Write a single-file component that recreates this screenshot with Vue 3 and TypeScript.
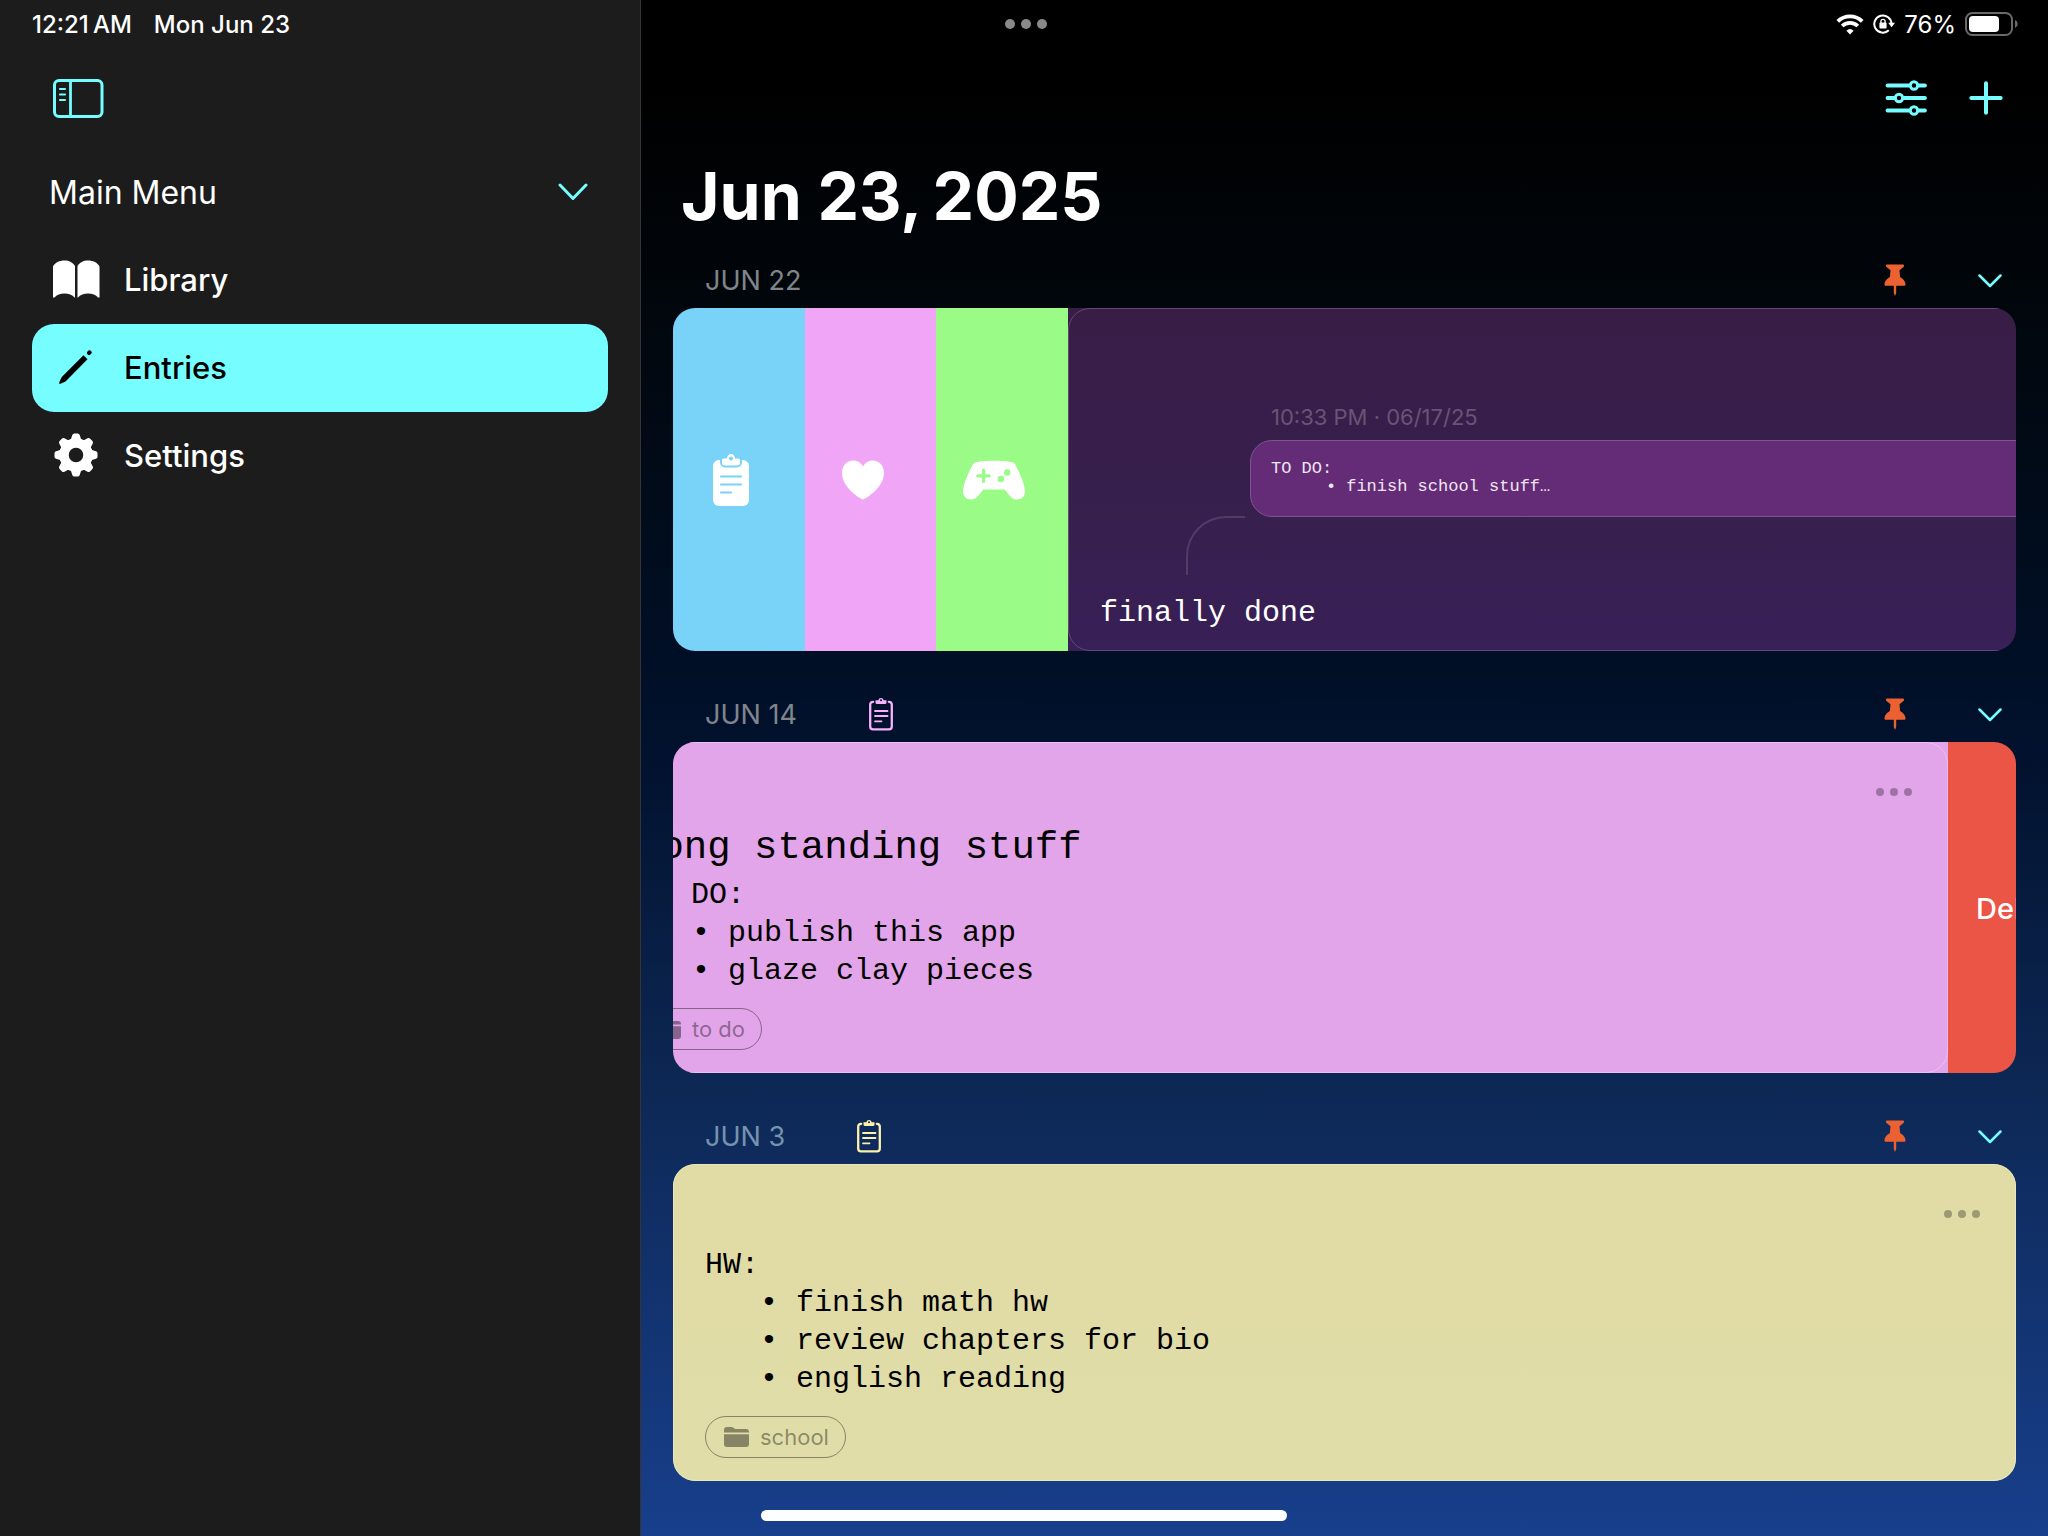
<script setup lang="ts">
interface Entry {
  id: number
  date: string
  tone: string
  title?: string
  heading: string
  items: string[]
  tag: string
  slid: boolean
}

const menu = [
  { id: 'library', label: 'Library', active: false },
  { id: 'entries', label: 'Entries', active: true },
  { id: 'settings', label: 'Settings', active: false },
]

const stamps = [
  { id: 'todo', label: 'To do' },
  { id: 'love', label: 'Love' },
  { id: 'game', label: 'Game' },
]

const teeth = [0, 45, 90, 135, 180, 225, 270, 315]

const clock = '12:21\u202fAM'
const today = 'Jun 23,\u2009 2025'.replace('\u2009 ', '\u2009')

const entries: Entry[] = [
  {
    id: 2,
    date: 'JUN 14',
    tone: 'pink',
    title: 'Long standing stuff',
    heading: 'TO DO:',
    items: ['publish this app', 'glaze clay pieces'],
    tag: 'to do',
    slid: true,
  },
  {
    id: 3,
    date: 'JUN 3',
    tone: 'sand',
    heading: 'HW:',
    items: ['finish math hw', 'review chapters for bio', 'english reading'],
    tag: 'school',
    slid: false,
  },
]
</script>

<template>
  <div class="app">
    <header class="status">
      <div class="status-left"><span>{{ clock }}</span><span>Mon Jun 23</span></div>
      <button class="plain grabber" aria-label="Multitasking"><i></i><i></i><i></i></button>
      <div class="status-right">
        <svg width="28" height="21" viewBox="0 0 28 21" fill="none" stroke="#fff">
          <path d="M1.8 7.3a17.4 17.4 0 0 1 24.4 0" stroke-width="3.8" />
          <path d="M6.2 12a11.2 11.2 0 0 1 15.6 0" stroke-width="3.8" />
          <path d="M14 20.5l-3.6-3.8a5.400 5.400 0 0 1 7.200 0z" fill="#fff" stroke="none" />
        </svg>
        <svg width="22" height="20" viewBox="0 0 22 20" fill="none">
          <path d="M15.800 16.300a8.600 8.600 0 1 1 2.700-6.300" stroke="#fff" stroke-width="2" />
          <path d="M15.200 8.800h6.800l-3.400 4.400z" fill="#fff" />
          <rect x="6.400" y="8.600" width="7.200" height="5.800" rx="1" fill="#fff" />
          <path d="M7.900 9V7.400a2.100 2.100 0 0 1 4.200 0V9" stroke="#fff" stroke-width="1.300" />
        </svg>
        <span class="percent">76%</span>
        <svg width="54" height="24" viewBox="0 0 54 24">
          <rect x="1" y="1" width="46" height="22" rx="6.500" fill="none" stroke="#6a6a6a" stroke-width="2" />
          <rect x="4" y="4" width="30" height="16" rx="4" fill="#fff" />
          <path d="M50 8a4.300 4.300 0 0 1 0 8z" fill="#6a6a6a" />
        </svg>
      </div>
    </header>

    <aside class="sidebar">
      <div class="side-tools">
        <button class="plain" aria-label="Toggle sidebar">
          <svg width="51" height="39" viewBox="0 0 51 39" fill="none" stroke="#75fdff" stroke-linecap="round">
            <rect x="1.500" y="1.500" width="47.500" height="36" rx="4.500" stroke-width="3" />
            <path d="M17.500 2v35" stroke-width="2.800" />
            <path d="M7 10h5M7 15.500h5M7 21h5" stroke-width="2.200" />
          </svg>
        </button>
      </div>
      <div class="menu-head">
        <h2>Main Menu</h2>
        <button class="plain" aria-label="Collapse menu">
          <svg width="30" height="18" viewBox="0 0 30 18" fill="none" stroke="#75fdff" stroke-width="3" stroke-linecap="round" stroke-linejoin="round">
            <path d="M2 2l13 13.500L28 2" />
          </svg>
        </button>
      </div>
      <nav>
        <a v-for="m in menu" :key="m.id" href="#" class="menu-row" :class="{ active: m.active }">
          <svg v-if="m.id === 'library'" width="48" height="38" viewBox="0 0 48 38" fill="#fff">
            <path d="M1 6.500C3 2.500 7.500.5 12.500.5c4.500 0 8.500 2 10.500 5.500v31.500h-.5c-2-2.500-6-4-10-4-4.200 0-8 1.500-10 4H1z" />
            <path d="M25.500 6c2-3.500 6-5.500 10.500-5.500 5 0 9.500 2 11.500 6v31H46c-2-2.500-5.800-4-10-4-4 0-8 1.500-10 4h-.5z" />
          </svg>
          <svg v-else-if="m.id === 'entries'" width="48" height="38" viewBox="0 0 48 38" fill="#000">
            <path d="M31.500 7.300l4 4L14 33c-1.700 1.300-3.800 2.100-5.800 2.800-.8.200-1.200-.2-1-1 .7-2 1.500-4.200 2.800-6z" />
            <path d="M35.300 3.800l1.200-1.200q1.200-1 2.600.3 1.300 1.500.3 2.700l-1.300 1.200q-1.200.9-2.500-.4-1.300-1.400-.3-2.600z" />
          </svg>
          <svg v-else width="48" height="44" viewBox="0 0 48 44" fill="#fff">
            <circle cx="24" cy="22" r="12" fill="none" stroke="#fff" stroke-width="9.500" />
            <path v-for="t in teeth" :key="t" :transform="`rotate(${t} 24 22)`" d="M17.500 7.500l1.500-1.500L20.300 2q.5-1.500 2-1.500h3.400q1.500 0 2 1.500L29 6l1.500 1.500z" />
          </svg>
          <span>{{ m.label }}</span>
        </a>
      </nav>
    </aside>

    <main class="main">
      <div class="tools">
        <button class="plain" aria-label="Filter">
          <svg width="42" height="36" viewBox="0 0 42 36" fill="none" stroke="#75fdff" stroke-width="3.800" stroke-linecap="round">
            <path d="M2.500 5.500h21.500M34 5.500h6M2.500 18h6.500M19 18h21M2.500 30.500h21.500M34 30.500h6" />
            <g stroke-width="3">
              <circle cx="29" cy="5.500" r="3.700" />
              <circle cx="14" cy="18" r="3.700" />
              <circle cx="29" cy="30.500" r="3.700" />
            </g>
          </svg>
        </button>
        <button class="plain" aria-label="New entry">
          <svg width="34" height="34" viewBox="0 0 34 34" fill="none" stroke="#75fdff" stroke-width="4" stroke-linecap="round">
            <path d="M17 2.300v29.400M2.300 17h29.400" />
          </svg>
        </button>
      </div>

      <h1>{{ today }}</h1>

      <section>
        <div class="section-head">
          <h3>JUN 22</h3>
          <span class="spring"></span>
          <svg class="pin" width="22" height="32" viewBox="0 0 22 32" fill="#eb6132">
            <path d="M3 .5h16c1.200 0 1.500 1.500.5 2.500l-4 3.300.6 6.700c3 1.500 5.400 4.500 5.400 7.200 0 1-.5 1.600-1.500 1.600h-18c-1 0-1.500-.6-1.500-1.600 0-2.700 2.400-5.700 5.400-7.200l.6-6.700-4-3.300C1.500 2 1.800.5 3 .5z" />
            <path d="M9.800 21h2.400v8l-1.200 3-1.200-3z" />
          </svg>
          <button class="plain" aria-label="Collapse">
            <svg width="24" height="16" viewBox="0 0 24 16" fill="none" stroke="#75fdff" stroke-width="2.500" stroke-linecap="round" stroke-linejoin="round">
              <path d="M1.500 3.500L12 14 22.500 3.500" />
            </svg>
          </button>
        </div>

        <div class="swipe">
          <button v-for="s in stamps" :key="s.id" class="plain stamp" :class="s.id" :aria-label="s.label">
            <svg v-if="s.id === 'todo'" width="36" height="52" viewBox="0 0 36 52" fill="#fff">
              <path d="M6 6h24a6 6 0 0 1 6 6v34a6 6 0 0 1-6 6H6a6 6 0 0 1-6-6V12a6 6 0 0 1 6-6z" />
              <path d="M8 5v3.500a4 4 0 0 0 4 4h12a4 4 0 0 0 4-4V5" fill="#fff" stroke="#79d3f9" stroke-width="2" />
              <path d="M11 4.500h3a4 4.500 0 0 1 8 0h3a2 2 0 0 1 2 2V9a2 2 0 0 1-2 2H11a2 2 0 0 1-2-2V6.500a2 2 0 0 1 2-2z" />
              <circle cx="18" cy="4.500" r="2" fill="#79d3f9" />
              <path d="M8 22.500h20M8 30.500h20M8 38.500h10" stroke="#79d3f9" stroke-width="2.200" stroke-linecap="round" />
            </svg>
            <svg v-else-if="s.id === 'love'" width="42" height="40" viewBox="0 0 42 40" fill="#fff">
              <path d="M21 39.500C19.500 39.500 0 28 0 13 0 5.500 4.800.5 11.300.5c4.200 0 7.700 2.300 9.700 6 2-3.700 5.500-6 9.700-6C37.200.5 42 5.500 42 13c0 15-19.500 26.500-21 26.500z" />
            </svg>
            <svg v-else width="62" height="40" viewBox="0 0 62 40" fill="#fff">
              <path d="M31 .7c7 0 14 .3 18 1.600 2 .6 3 1.700 4 3.700C56.500 13 62 24.500 62 31.500c0 4.800-3.500 8-8 8-3.200 0-5-1.300-7-3.500l-5.500-6.500h-21L15 36c-2 2.200-3.800 3.500-7 3.500-4.500 0-8-3.200-8-8C0 24.500 5.500 13 9 6c1-2 2-3.100 4-3.700C17 1 24 .7 31 .7z" />
              <path d="M20.500 10v11.500M14.700 15.800h11.600" stroke="#9bfb87" stroke-width="3.200" stroke-linecap="round" />
              <circle cx="44.200" cy="12.500" r="3.200" fill="#9bfb87" />
              <circle cx="37.800" cy="19" r="3.200" fill="#9bfb87" />
            </svg>
          </button>

          <article class="card plum">
            <div class="frame reply-frame">
              <div class="reply">
                <time>10:33 PM · 06/17/25</time>
                <blockquote>
                  <p>TO DO:</p>
                  <ul>
                    <li><span>•</span>finish school stuff…</li>
                  </ul>
                </blockquote>
              </div>
              <div class="thread"></div>
              <p class="body">finally done</p>
            </div>
          </article>
        </div>
      </section>

      <section v-for="e in entries" :key="e.id">
        <div class="section-head">
          <h3 :class="{ far: e.id === 3 }">{{ e.date }}</h3>
          <svg class="badge" :class="e.tone" width="24" height="34" viewBox="0 0 24 34" fill="none" stroke="currentColor" stroke-linecap="round">
            <path d="M4.200 4.800H4A2.800 2.800 0 0 0 1.200 7.500v22a2.800 2.800 0 0 0 2.800 2.800h16a2.800 2.800 0 0 0 2.800-2.800v-22A2.800 2.800 0 0 0 20 4.800h-.2" stroke-width="2.300" />
            <path d="M6.500 3.200h2.800a2.800 3 0 0 1 5.400 0h2.800v2.300a1.500 1.500 0 0 1-1.500 1.500H8a1.500 1.500 0 0 1-1.500-1.500zM12 2.300a1 1 0 1 0 0 2 1 1 0 1 0 0-2z" fill="currentColor" stroke="none" fill-rule="evenodd" />
            <path d="M6 14h12.500M6 19h12.500M6 24.300h6.500" stroke-width="1.800" />
          </svg>
          <span class="spring"></span>
          <svg class="pin" width="22" height="32" viewBox="0 0 22 32" fill="#eb6132">
            <path d="M3 .5h16c1.200 0 1.500 1.500.5 2.500l-4 3.300.6 6.700c3 1.500 5.400 4.500 5.400 7.200 0 1-.5 1.600-1.500 1.600h-18c-1 0-1.500-.6-1.500-1.600 0-2.700 2.400-5.700 5.400-7.200l.6-6.700-4-3.300C1.500 2 1.800.5 3 .5z" />
            <path d="M9.800 21h2.400v8l-1.200 3-1.200-3z" />
          </svg>
          <button class="plain" aria-label="Collapse">
            <svg width="24" height="16" viewBox="0 0 24 16" fill="none" stroke="#75fdff" stroke-width="2.500" stroke-linecap="round" stroke-linejoin="round">
              <path d="M1.500 3.500L12 14 22.500 3.500" />
            </svg>
          </button>
        </div>

        <div class="swipe">
          <article class="card" :class="[e.tone, { slid: e.slid }]">
            <div class="frame">
              <div class="more-row">
                <button class="plain more" aria-label="More"><i></i><i></i><i></i></button>
              </div>
              <h4 v-if="e.title">{{ e.title }}</h4>
              <div class="body">
                <p>{{ e.heading }}</p>
                <ul>
                  <li v-for="t in e.items" :key="t"><span>•</span>{{ t }}</li>
                </ul>
              </div>
              <a href="#" class="tag">
                <svg width="25" height="20" viewBox="0 0 25 20" fill="currentColor">
                  <path d="M0 5.500V3a3 3 0 0 1 3-3h4.500c1.200 0 2 .8 3 1.500.6.500 1.200.6 2 .6H22a3 3 0 0 1 3 3v.4z" />
                  <path d="M0 7.300h25V17a3 3 0 0 1-3 3H3a3 3 0 0 1-3-3z" />
                </svg>
                <span>{{ e.tag }}</span>
              </a>
            </div>
          </article>
          <button v-if="e.slid" class="plain delete">Delete</button>
        </div>
      </section>
    </main>

    <div class="home-bar"></div>
  </div>
</template>

<style>
body {
  background: #000;
}
</style>

<style scoped>
.app {
  position: relative;
  display: grid;
  grid-template-columns: calc(31.25% + 1px) minmax(0, 1fr);
  grid-template-rows: 48px 1fr;
  min-height: 100vh;
  color: #fff;
  font-family: Inter, 'Noto Sans', sans-serif;
  font-size: 24px;
}

h1, h2, h3, h4, p, ul, blockquote {
  margin: 0;
  padding: 0;
  font-weight: 400;
  list-style: none;
}

a {
  color: inherit;
  text-decoration: none;
}

svg {
  display: block;
  flex: none;
}

.plain {
  margin: 0;
  padding: 0;
  border: 0;
  background: none;
  color: inherit;
  font: inherit;
  cursor: pointer;
}

/* status bar */
.status {
  grid-area: 1 / 1 / 2 / 3;
  z-index: 1;
  display: grid;
  grid-template-columns: 1fr auto 1fr;
  align-items: center;
  padding: 0 29px 0 32px;
  font-size: 24px;
  font-weight: 500;
}

.status-left {
  display: flex;
  gap: 22px;
}

.status-right {
  display: flex;
  justify-content: flex-end;
  align-items: center;
  gap: 9px;
}

.percent {
  font-weight: 400;
}

.grabber,
.more {
  display: flex;
  gap: 6px;
}

.grabber i {
  width: 10px;
  height: 10px;
  border-radius: 50%;
  background: #8a8a8c;
}

/* sidebar */
.sidebar {
  grid-area: 1 / 1 / 3 / 2;
  padding: 48px 32px 0;
  border-right: 1px solid #353537;
  background: #1c1c1c;
}

.side-tools {
  display: flex;
  align-items: center;
  height: 100px;
  padding-left: 21px;
}

.menu-head {
  display: flex;
  align-items: center;
  justify-content: space-between;
  height: 88px;
  padding: 0 20px 0 17px;
}

.menu-head h2 {
  font-size: 32px;
}

.menu-row {
  display: flex;
  align-items: center;
  gap: 24px;
  box-sizing: border-box;
  height: 88px;
  padding: 0 0 2px 20px;
  border-radius: 22px;
  font-size: 31px;
  font-weight: 500;
}

.menu-row.active {
  background: #75fdff;
  color: #000;
}

/* journal column */
.main {
  grid-area: 1 / 2 / 3 / 3;
  padding: 48px 32px 55px;
  background: linear-gradient(#000 0, #000 6%, #01070d 21%, #010f26 43%, #02122f 50%, #0d2855 71%, #183f8c 100%);
}

.tools {
  display: flex;
  align-items: center;
  justify-content: flex-end;
  gap: 42px;
  height: 100px;
  padding-right: 13px;
}

h1 {
  padding: 8px 0 16px 8px;
  font-size: 66px;
  font-weight: 700;
  line-height: 80px;
}

.section-head {
  display: flex;
  align-items: center;
  height: 56px;
  padding: 0 14px 0 32px;
}

section + section {
  margin-top: 35px;
}

.section-head h3 {
  color: #80858b;
  font-size: 27px;
}

.section-head h3.far {
  color: #7593ad;
}

.spring {
  flex: 1;
}

.pin {
  margin-right: 72px;
}

.badge {
  margin-left: 72px;
}

.badge.pink {
  color: #f5b1fb;
}

.badge.sand {
  color: #fdf0ac;
}

.swipe {
  display: flex;
  overflow: hidden;
  border-radius: 22px;
}

.stamp {
  display: flex;
  flex: 0 0 132px;
  align-items: center;
  justify-content: center;
  padding-right: 16px;
}

.stamp.todo {
  background: #79d3f9;
}

.stamp.love {
  flex-basis: 131px;
  background: #f1a5f7;
}

.stamp.game {
  background: #9bfb87;
}

.card {
  flex: 0 0 100%;
  min-width: 0;
}

.card.slid {
  margin-left: -68px;
}

.plum {
  background: linear-gradient(#381d46, #371f4d 55%, #382058);
  --line: #624b70;
}

.card.pink {
  background: #e3a5ea;
  color: #000;
  --line: #edbff1;
}

.card.sand {
  background: linear-gradient(#e1dba5, #e0dda8);
  color: #000;
  --line: #eae6bd;
}

.frame {
  display: flex;
  flex-direction: column;
  box-sizing: border-box;
  height: 100%;
  padding: 0 31px 22px;
  border: 1px solid var(--line);
  border-radius: 22px;
}

.more-row {
  display: flex;
  align-items: center;
  justify-content: flex-end;
  height: 65px;
  padding: 16px 4px 0 0;
}

.more i {
  width: 8px;
  height: 8px;
  border-radius: 50%;
  background: currentColor;
  opacity: 0.3;
}

.body,
h4,
blockquote {
  font-family: 'Liberation Mono', monospace;
}

.body {
  font-size: 30px;
  line-height: 38px;
}

h4 {
  margin-bottom: 4px;
  font-size: 39px;
  line-height: 48px;
}

li {
  display: flex;
  gap: 18px;
  padding-left: 55px;
  white-space: nowrap;
}

.tag {
  display: flex;
  align-items: center;
  align-self: flex-start;
  gap: 11px;
  box-sizing: border-box;
  height: 42px;
  margin-top: 18px;
  padding: 0 16px 0 18px;
  border: 1px solid rgb(0 0 0 / 40%);
  border-radius: 21px;
  color: rgb(0 0 0 / 40%);
  font-size: 22px;
}

.reply-frame {
  padding: 94px 0 18px 31px;
}

.reply {
  margin-left: 150px;
}

.reply time {
  display: block;
  padding-left: 21px;
  color: #6a5375;
  font-size: 22px;
  line-height: 28px;
}

blockquote {
  box-sizing: border-box;
  height: 77px;
  margin-top: 9px;
  padding: 19px 20px;
  border: 1px solid #7d5391;
  border-radius: 22px;
  background: #642c76;
  color: #f0e6f3;
  font-size: 17px;
  line-height: 18px;
}

blockquote li {
  gap: 10px;
}

.thread {
  width: 57px;
  height: 57px;
  margin: -1px 0 19px 86px;
  border: solid #523c68;
  border-width: 2px 0 0 2px;
  border-top-left-radius: 40px;
}

.delete {
  flex: 1 0 auto;
  padding: 2px 0 0 28px;
  background: #eb5545;
  font-size: 29px;
  font-weight: 500;
  text-align: left;
}

.home-bar {
  position: absolute;
  bottom: 15px;
  left: 50%;
  width: 526px;
  height: 11px;
  border-radius: 6px;
  background: #fff;
  transform: translateX(-50%);
}
</style>
